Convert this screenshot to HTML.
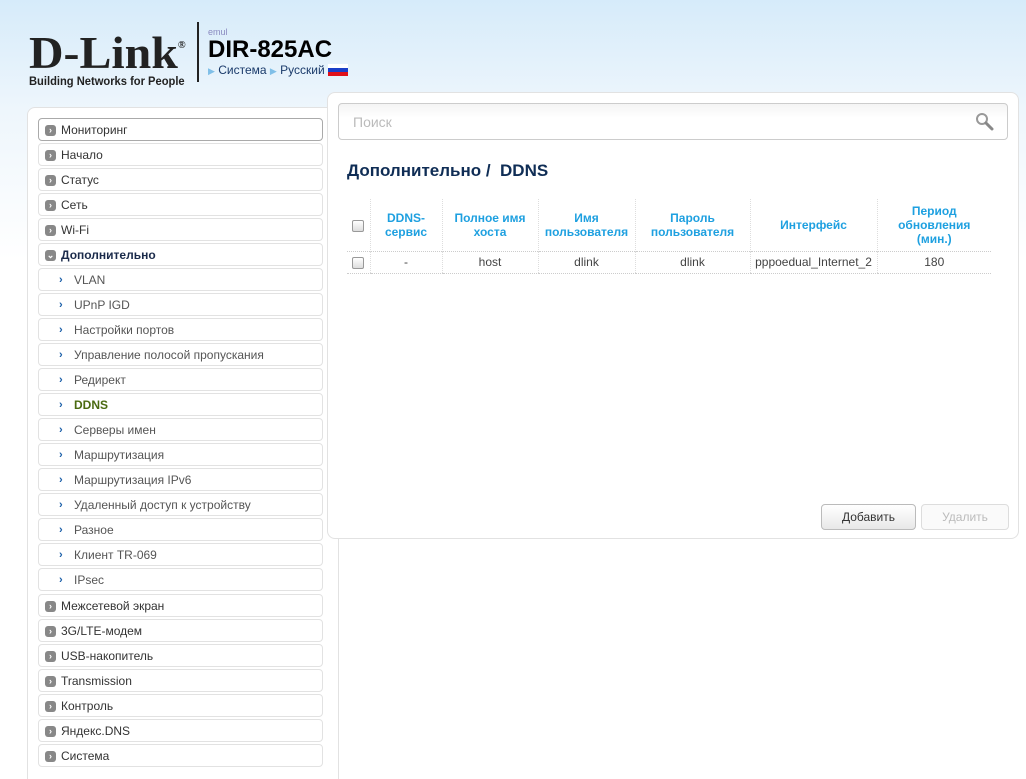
<!DOCTYPE html>
<html style="background:#fff"><head><meta charset="utf-8"><style>
*{box-sizing:border-box}
html,body{margin:0;width:1026px;height:779px;overflow:hidden}
body{font-family:"Liberation Sans",Arial,sans-serif;background:linear-gradient(#d6ebfa 0,#eef6fc 110px,#fff 260px);position:relative}
.logo{position:absolute;left:29px;top:26px}
.dl{font-family:"Liberation Serif",serif;font-weight:bold;font-size:46px;color:#222;line-height:40px;transform:scaleX(1.04);transform-origin:left;white-space:nowrap}
.bn{font-size:12px;font-weight:bold;color:#222;margin-top:1px;transform:scaleX(0.93);transform-origin:left;white-space:nowrap}
.sep{position:absolute;left:197px;top:22px;width:2px;height:60px;background:#222}
.emul{position:absolute;left:208px;top:27px;font-size:9px;color:#8a8ac0}
.model{position:absolute;left:208px;top:36px;font-size:24px;font-weight:bold;color:#000}
.crumbs{position:absolute;left:208px;top:63px;font-size:12px;color:#1a3a6a}
.tri{color:#7fbfe8;font-size:9px}
.flag{display:inline-block;width:20px;height:12px;vertical-align:-2px;background:linear-gradient(#fff 0 33%,#1a3ec8 33% 66%,#e0101a 66%)}
.left{position:absolute;left:27px;top:107px;width:312px;height:680px;background:#fff;border:1px solid #e2e2e2;border-radius:8px}
.item{position:absolute;left:38px;width:285px;height:23px;border:1px solid #e2e2e2;border-radius:4px;background:#fff;font-size:12px;color:#333;line-height:23px;padding-left:22px}
.item .ic{position:absolute;left:6px;top:6px;width:11px;height:11px;border-radius:3px;background:#888;color:#fff;font-size:9px;line-height:10px;text-align:center;font-weight:bold}
.sub{padding-left:35px;color:#555}
.sub .ar{position:absolute;left:20px;top:0;color:#1a5ea8;font-size:11px;font-weight:bold}
.right{position:absolute;left:327px;top:92px;width:692px;height:447px;background:#fff;border:1px solid #e2e2e2;border-radius:8px}
.search{position:absolute;left:338px;top:103px;width:670px;height:37px;border:1px solid #ccc;border-radius:4px;background:linear-gradient(#f4f4f4,#fff 40%);font-size:14px;color:#bbb;padding:10px 14px}
h1{position:absolute;left:347px;top:161px;margin:0;font-size:17px;color:#0f2d55;font-weight:bold}
table{position:absolute;left:347px;top:199px;border-collapse:collapse;font-size:12px}
th{color:#1ea0e0;font-weight:bold;height:52px;border-left:1px dotted #ddd;padding:0 4px;line-height:14px}
td{height:22px;text-align:center;color:#444;border-left:1px dotted #ddd;border-top:1px dotted #ccc;border-bottom:1px dotted #ccc}
th:first-child,td:first-child{border-left:none}
.cb{display:inline-block;width:12px;height:12px;border:1px solid #999;border-radius:2px;background:linear-gradient(#fff,#ddd);vertical-align:middle}
.btn{position:absolute;top:504px;height:26px;border:1px solid #bbb;border-radius:4px;background:linear-gradient(#fff,#e8e8e8);font-size:12px;text-align:center;line-height:24px}
</style></head><body>
<div class="logo"><div class="dl">D-Link<sup style="font-size:10px;vertical-align:20px">®</sup></div><div class="bn">Building Networks for People</div></div>
<div class="sep"></div>
<div class="emul">emul</div>
<div class="model">DIR-825AC</div>
<div class="crumbs"><span class="tri">▶</span> Система <span class="tri">▶</span> Русский <span class="flag"></span></div>
<div class="left"></div>
<div class="item" style="top:118px;border-color:#aaa">
<span class="ic">›</span>Мониторинг</div>
<div class="item" style="top:143px"><span class="ic">›</span>Начало</div>
<div class="item" style="top:168px"><span class="ic">›</span>Статус</div>
<div class="item" style="top:193px"><span class="ic">›</span>Сеть</div>
<div class="item" style="top:218px"><span class="ic">›</span>Wi-Fi</div>
<div class="item" style="top:243px;font-weight:bold;color:#1a2a4a"><span class="ic">⌄</span>Дополнительно</div>
<div class="item sub" style="top:268px"><span class="ar">›</span>VLAN</div>
<div class="item sub" style="top:293px"><span class="ar">›</span>UPnP IGD</div>
<div class="item sub" style="top:318px"><span class="ar">›</span>Настройки портов</div>
<div class="item sub" style="top:343px"><span class="ar">›</span>Управление полосой пропускания</div>
<div class="item sub" style="top:368px"><span class="ar">›</span>Редирект</div>
<div class="item sub" style="top:393px;color:#4a6a10;font-weight:bold"><span class="ar">›</span>DDNS</div>
<div class="item sub" style="top:418px"><span class="ar">›</span>Серверы имен</div>
<div class="item sub" style="top:443px"><span class="ar">›</span>Маршрутизация</div>
<div class="item sub" style="top:468px"><span class="ar">›</span>Маршрутизация IPv6</div>
<div class="item sub" style="top:493px"><span class="ar">›</span>Удаленный доступ к устройству</div>
<div class="item sub" style="top:518px"><span class="ar">›</span>Разное</div>
<div class="item sub" style="top:543px"><span class="ar">›</span>Клиент TR-069</div>
<div class="item sub" style="top:568px"><span class="ar">›</span>IPsec</div>
<div class="item" style="top:594px"><span class="ic">›</span>Межсетевой экран</div>
<div class="item" style="top:619px"><span class="ic">›</span>3G/LTE-модем</div>
<div class="item" style="top:644px"><span class="ic">›</span>USB-накопитель</div>
<div class="item" style="top:669px"><span class="ic">›</span>Transmission</div>
<div class="item" style="top:694px"><span class="ic">›</span>Контроль</div>
<div class="item" style="top:719px"><span class="ic">›</span>Яндекс.DNS</div>
<div class="item" style="top:744px"><span class="ic">›</span>Система</div>
<div class="right"></div>
<div class="search">Поиск
<svg style="position:absolute;right:12px;top:8px" width="20" height="20" viewBox="0 0 20 20"><circle cx="7" cy="7" r="5" fill="none" stroke="#999" stroke-width="2"/><path d="M11 11l6 6" stroke="#888" stroke-width="3" stroke-linecap="round"/></svg></div>
<h1>Дополнительно / &nbsp;DDNS</h1>
<table>
<tr><th style="width:23px"><span class="cb"></span></th><th style="width:72px">DDNS-<br>сервис</th><th style="width:96px">Полное имя<br>хоста</th><th style="width:97px">Имя<br>пользователя</th><th style="width:115px">Пароль<br>пользователя</th><th style="width:127px">Интерфейс</th><th style="width:114px">Период<br>обновления<br>(мин.)</th></tr>
<tr><td><span class="cb"></span></td><td>-</td><td>host</td><td>dlink</td><td>dlink</td><td>pppoedual_Internet_2</td><td>180</td></tr>
</table>
<div class="btn" style="left:821px;width:95px;color:#333">Добавить</div>
<div class="btn" style="left:921px;width:88px;color:#bbb;border-color:#ddd;background:#fafafa">Удалить</div>
</body></html>
